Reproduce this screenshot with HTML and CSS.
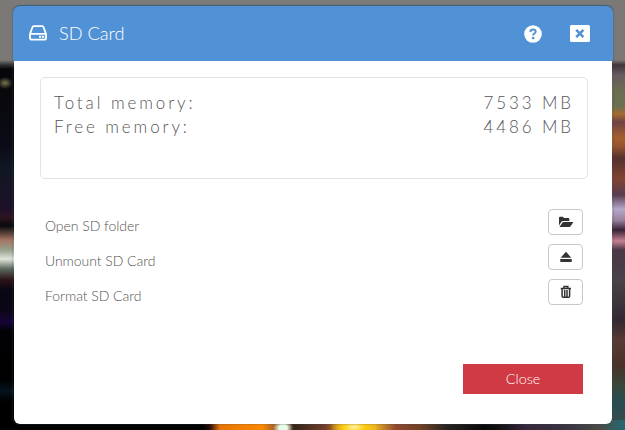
FILE: index.html
```html
<!DOCTYPE html>
<html lang="en">
<head>
<meta charset="utf-8">
<title>SD Card</title>
<link rel="stylesheet" href="styles.css">
</head>
<body>
<section class="dialog" role="dialog">
  <header class="header">
    <svg class="drive" viewBox="0 0 18 16" width="18" height="16"><path d="M1 9 L3.4 2.2 Q3.7 1.1 4.8 1.1 H13.2 Q14.3 1.1 14.6 2.2 L17 9 V13 Q17 14.7 15.3 14.7 H2.7 Q1 14.7 1 13 Z M1.2 8.8 H16.8" fill="none" stroke="#fff" stroke-width="1.8"/><path d="M10 11.8 h2.2 M13 11.8 h2.2" stroke="#fff" stroke-width="2"/></svg>
    <h1 class="title">SD Card</h1>
    <svg class="help" viewBox="0 0 18 18" width="18" height="18"><circle cx="9" cy="9" r="8.8" fill="#fff"/><path d="M6.3 6.9 C6.6 3.6 11.8 3.7 11.7 6.8 C11.6 8.6 9.1 8.5 9.1 10.5" fill="none" stroke="#5191d5" stroke-width="2"/><circle cx="9.1" cy="13" r="1.35" fill="#5191d5"/></svg>
    <svg class="dismiss" viewBox="0 0 20 17" width="20" height="17"><rect width="20" height="17" rx="1.5" fill="#fff"/><path d="M6.2 4.9 L13.4 12.1 M13.4 4.9 L6.2 12.1" stroke="#5191d5" stroke-width="2.6"/></svg>
  </header>
  <div class="content">
    <dl class="memory">
      <div class="line"><dt>Total memory:</dt><dd>7533 MB</dd></div>
      <div class="line"><dt>Free memory:</dt><dd>4486 MB</dd></div>
    </dl>
    <div class="actions">
      <div class="action"><span>Open SD folder</span><button class="tool" aria-label="Open folder"><svg viewBox="0 0 16 12" width="16" height="12"><path d="M1 9.5 V1.8 Q1 .8 2 .8 H4.7 Q5.5 .8 5.7 2 H10.3 Q11.3 2 11.3 3 V5 H5.2 Q4 5 3.4 5.8 Z M1.5 11 L4.3 6.7 Q4.8 6 5.7 6 H15.4 L12.6 10.3 Q12.1 11 11.2 11 Z" fill="#333"/></svg></button></div>
      <div class="action"><span>Unmount SD Card</span><button class="tool" aria-label="Eject"><svg viewBox="0 0 16 12" width="16" height="12"><path d="M8 .8 L13.3 6.7 H2.7 Z M2.3 8 H13.7 V11 H2.3 Z" fill="#333"/></svg></button></div>
      <div class="action"><span>Format SD Card</span><button class="tool" aria-label="Format"><svg viewBox="0 0 12 14" width="12" height="14"><path d="M.7 3.4 H11 M4 3 V1.5 H7.8 V3" fill="none" stroke="#333" stroke-width="1.5"/><path d="M2.1 3.5 V11.3 Q2.1 12.3 3.1 12.3 H8.6 Q9.6 12.3 9.6 11.3 V3.5 M4.7 5 V11.4 M7 5 V11.4" fill="none" stroke="#333" stroke-width="1.5"/></svg></button></div>
    </div>
    <footer class="footer"><button class="close">Close</button></footer>
  </div>
</section>
</body>
</html>
```
FILE: styles.css
```css
* { box-sizing: border-box; }
html, body { margin: 0; height: 430px; overflow: hidden; }
body {
  padding: 6px 12px 0 13px;
  font-family: Lato, sans-serif;
  font-weight: 300;
  color: #555;
  background:
    radial-gradient(ellipse 24px 12px at 354px 427px, #fff4a0, #fc1 45%, transparent),
    radial-gradient(ellipse 10px 8px at 283px 428px, #e8ffe8 40%, transparent),
    linear-gradient(90deg, #000 202px, #2a0d08 210px, #e87505 220px, #f80 262px, #b86a20 272px, #352619 295px, #713d2c 325px, #e5a018 345px, #eab022 375px, #8f482d 396px, #704125 420px, #282320 447px, #080808 485px, #141214 500px, #35273a 525px, #38333f 565px, #494b47 600px, #236a72 625px) 0 420px / 625px 10px no-repeat,
    radial-gradient(ellipse 8px 6px at 5px 83px, #77724b, transparent),
    linear-gradient(180deg, #7b7876 60px, #303034 65px, #06060a 69px, #08080c 91px, #0b0b16 145px, #101722 168px, #1e1029 210px, #2c1520 217px, #08090c 226px, #a47561 240px, #97a18f 250px, #dfe6d9 259px, #59675c 269px, #2d1217 280px, #080712 290px, #0c0617 310px, #160537 322px, #020205 331px, #000 380px, #05131c 391px, #000 402px) 0 0 / 15px 430px no-repeat,
    linear-gradient(180deg, #7b7876 60px, #40343d 65px, #675c61 75px, #6b6e50 92px, #6b7051 106px, #a36c31 114px, #6f4345 122px, #a65f2b 138px, #925331 147px, #54302e 158px, #814333 178px, #583d50 195px, #b5a8c9 209px, #99829e 220px, #382237 230px, #c48292 241px, #4b3645 250px, #494249 280px, #332831 320px, #583a34 340px, #493328 365px, #37483c 386px, #264c53 402px, #3e4a49 430px) 610px 0 / 15px 430px no-repeat,
    linear-gradient(180deg, #7d7b79 0 62px, #08080a 67px);
}
.dialog { height: 418px; border-radius: 6px; box-shadow: 0 0 2px rgb(60 80 100 / 70%); }
.header {
  display: flex;
  align-items: center;
  height: 55px;
  padding: 0 23px 0 16px;
  background: #5191d5;
  border-radius: 7px 7px 2px 2px;
  box-shadow: 0 -1px 1px #3f617c;
  color: #fff;
}
.drive { margin-right: 12px; margin-top: -2px; }
.title { flex: 1; margin: -2px 0 0; font-size: 18.2px; line-height: 24px; font-weight: 300; }
.help { margin-right: 28px; }
.content {
  height: 363px;
  margin: 0 1px;
  padding: 16px 24px 0 26px;
  background: #fff;
  border-radius: 0 0 6px 6px;
}
.memory {
  height: 102px;
  margin: 0;
  padding: 13px 13px 0 13px;
  border: 1px solid #e3e3e3;
  border-radius: 5px;
  font-size: 17px;
  font-weight: 300;
  line-height: 24px;
  letter-spacing: 2.9px;
}
.line { display: flex; justify-content: space-between; }
dd { margin: 0; }
.actions { padding: 27px 5px 0; font-size: 14px; letter-spacing: -0.05px; }
.action { display: flex; justify-content: space-between; height: 35px; line-height: 40px; }
.tool {
  display: flex;
  align-items: center;
  justify-content: center;
  width: 35px;
  height: 26px;
  margin-top: 3px;
  padding: 0;
  background: #fff;
  border: 1px solid #c8c8c8;
  border-radius: 4px;
}
.footer { display: flex; justify-content: flex-end; padding: 53px 5px 0; }
.close {
  width: 120px;
  height: 30px;
  padding: 0;
  border: 0;
  background: #d03a44;
  color: #fff;
  font: 300 14.4px/30px Lato, sans-serif;
}
```
